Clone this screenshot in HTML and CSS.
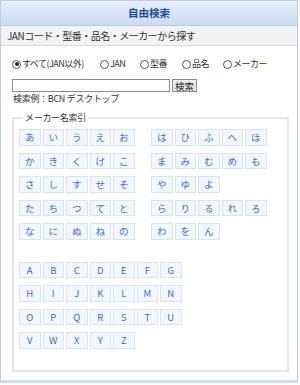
FILE: index.html
```html
<!DOCTYPE html>
<html lang="ja">
<head>
  <meta charset="UTF-8" />
  <meta name="viewport" content="width=device-width, initial-scale=1.0" />
  <title>自由検索</title>
  <link rel="stylesheet" href="styles.css">
</head>
<body>
  <div class="panel">
    <h2 class="panel-title">自由検索</h2>
    <div class="panel-sub">JANコード・型番・品名・メーカーから探す</div>
    <div class="panel-body">
      <form class="search" onsubmit="return false">
        <div class="radios">
          <label><input type="radio" name="mode" checked>すべて(JAN以外)</label>
          <label><input type="radio" name="mode">JAN</label>
          <label><input type="radio" name="mode">型番</label>
          <label><input type="radio" name="mode">品名</label>
          <label><input type="radio" name="mode">メーカー</label>
        </div>
        <div class="query">
          <input type="text" class="query-input">
          <button class="query-btn">検索</button>
        </div>
        <p class="hint">検索例：BCN デスクトップ</p>
      </form>

      <fieldset class="maker-index">
        <legend>メーカー名索引</legend>
        <div class="kana">
          <div class="keys keys-kana">
            <a>あ</a><a>い</a><a>う</a><a>え</a><a>お</a>
            <a>か</a><a>き</a><a>く</a><a>け</a><a>こ</a>
            <a>さ</a><a>し</a><a>す</a><a>せ</a><a>そ</a>
            <a>た</a><a>ち</a><a>つ</a><a>て</a><a>と</a>
            <a>な</a><a>に</a><a>ぬ</a><a>ね</a><a>の</a>
          </div>
          <div class="keys keys-kana">
            <a>は</a><a>ひ</a><a>ふ</a><a>へ</a><a>ほ</a>
            <a>ま</a><a>み</a><a>む</a><a>め</a><a>も</a>
            <a>や</a><a>ゆ</a><a>よ</a><span></span><span></span>
            <a>ら</a><a>り</a><a>る</a><a>れ</a><a>ろ</a>
            <a>わ</a><a>を</a><a>ん</a>
          </div>
        </div>
        <div class="keys keys-alpha">
          <a>A</a><a>B</a><a>C</a><a>D</a><a>E</a><a>F</a><a>G</a>
          <a>H</a><a>I</a><a>J</a><a>K</a><a>L</a><a>M</a><a>N</a>
          <a>O</a><a>P</a><a>Q</a><a>R</a><a>S</a><a>T</a><a>U</a>
          <a>V</a><a>W</a><a>X</a><a>Y</a><a>Z</a>
        </div>
      </fieldset>
    </div>
  </div>
</body>
</html>
```

FILE: styles.css
```css
body {
  margin: 0;
  font-family: "Noto Sans CJK JP", "Noto Sans", sans-serif;
  color: #333;
  background: #fff;
}
.panel {
  width: 296px;
  border: 1px solid #b9cde8;
  border-bottom: 3px solid #cfdcec;
}
.panel-title {
  margin: 0;
  height: 24px;
  line-height: 24px;
  text-align: center;
  font-size: 10.5px;
  font-weight: bold;
  color: #1f4d9e;
  background: linear-gradient(#e6eef9, #cadbf1);
  border-bottom: 1px solid #b3c8e6;
}
.panel-sub {
  height: 19px;
  line-height: 19px;
  padding-left: 6px;
  font-size: 10px;
  letter-spacing: -0.5px;
  color: #333;
  background: #f3f3f3;
  border-bottom: 1px solid #d3dcea;
}
.panel-body {
  padding: 12px 8px 8px 10px;
}
.radios {
  display: grid;
  grid-template-columns: 88px 40px 42px 41px auto;
  padding-left: 1px;
  font-size: 9px;
  letter-spacing: -0.5px;
  line-height: 12px;
  white-space: nowrap;
}
.radios label {
  display: flex;
  align-items: center;
}
.radios input {
  appearance: none;
  margin: 0 1px 0 0;
  width: 9px;
  height: 9px;
  border: 1px solid #555;
  border-radius: 50%;
  background: #fff;
  box-sizing: border-box;
  position: relative;
}
.radios input:checked::after {
  content: "";
  position: absolute;
  left: 1.5px;
  top: 1.5px;
  width: 4px;
  height: 4px;
  border-radius: 50%;
  background: #222;
}
.query {
  display: flex;
  gap: 2px;
  margin-top: 9px;
  padding-left: 1px;
}
.query-input {
  width: 158px;
  height: 13px;
  box-sizing: border-box;
  border: 1px solid #8a8a8a;
  padding: 0 2px;
  margin: 0;
  font-size: 9px;
}
.query-btn {
  height: 13px;
  width: 25px;
  box-sizing: border-box;
  margin: 0;
  padding: 0;
  border: 1px solid #8a8a8a;
  background: #ececec;
  font-family: inherit;
  font-size: 9.5px;
  line-height: 10px;
  color: #222;
}
.hint {
  margin: 1px 0 0 2px;
  font-size: 9px;
  line-height: 12px;
  letter-spacing: -0.3px;
}
.maker-index {
  margin: 7px 0 0 1px;
  padding: 5px 5px 21px 5px;
  width: 277px;
  box-sizing: border-box;
  border: 2px solid #e6e6e6;
}
.maker-index legend {
  padding: 0 2px;
  margin-left: 4px;
  font-size: 9px;
  line-height: 12px;
  letter-spacing: -0.3px;
  color: #333;
}
.kana {
  display: flex;
  gap: 16.5px;
}
.keys {
  display: grid;
  grid-auto-rows: 16.5px;
  column-gap: 2px;
  row-gap: 7px;
}
.keys-kana {
  grid-template-columns: repeat(5, 21.5px);
}
.keys-alpha {
  grid-template-columns: repeat(7, 21.5px);
  margin-top: 22px;
}
.keys a {
  display: flex;
  align-items: center;
  justify-content: center;
  background: #f2f7fd;
  border: 1px solid #d8e4f2;
  color: #3a6fc4;
  font-size: 9.5px;
  cursor: pointer;
}
```
